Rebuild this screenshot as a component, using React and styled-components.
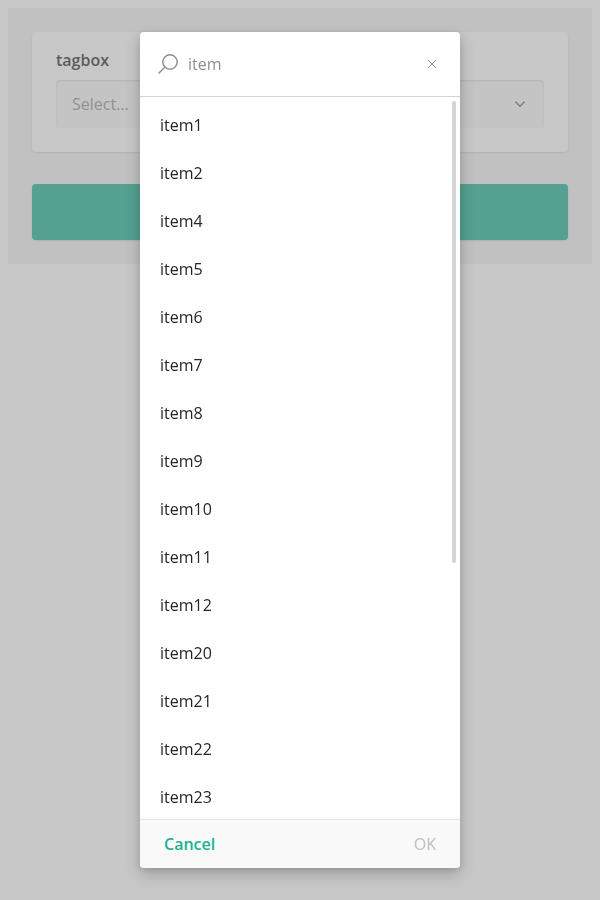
import React, { useState } from "react";
import styled, { createGlobalStyle } from "styled-components";

const GlobalStyle = createGlobalStyle`
  *, *::before, *::after { box-sizing: border-box; }
  body {
    margin: 8px;
    background: #fff;
    font-family: "Open Sans", "Noto Sans", sans-serif;
    font-size: 16px;
    line-height: 24px;
  }
  button, input { font: inherit; }
`;

const Survey = styled.form`
  display: flex;
  flex-direction: column;
  gap: 32px;
  padding: 24px;
  background: #f3f3f3;
`;

const Question = styled.section`
  padding: 16px 24px 24px;
  background: #fff;
  border-radius: 4px;
  box-shadow: 0 1px 2px rgba(0, 0, 0, 0.15);
`;

const QuestionTitle = styled.label`
  display: block;
  margin-bottom: 8px;
  font-weight: 600;
  color: #262626;
`;

const TagBox = styled.div`
  display: flex;
  align-items: center;
  height: 48px;
  padding: 0 16px;
  background: #f9f9f9;
  border-radius: 4px;
  box-shadow: inset 0 1px 2px rgba(0, 0, 0, 0.15);
`;

const TextInput = styled.input`
  flex: 1;
  min-width: 0;
  height: 24px;
  padding: 0;
  border: 0;
  outline: 0;
  background: transparent;
  color: #909090;
  &::placeholder { color: #909090; opacity: 1; }
`;

const IconButton = styled.button`
  display: flex;
  align-items: center;
  justify-content: center;
  width: 16px;
  height: 16px;
  padding: 0;
  border: 0;
  background: transparent;
  color: #909090;
`;

const CompleteButton = styled.button`
  height: 56px;
  border: 0;
  border-radius: 4px;
  background: #19b394;
  color: #fff;
  font-weight: 600;
  box-shadow: 0 1px 2px rgba(0, 0, 0, 0.15);
`;

const Overlay = styled.div`
  position: fixed;
  inset: 0;
  display: flex;
  justify-content: center;
  padding: 32px;
  background: rgba(144, 144, 144, 0.5);
`;

const Popup = styled.div`
  display: flex;
  flex-direction: column;
  width: 100%;
  max-width: 320px;
  overflow: hidden;
  background: #fff;
  border-radius: 4px;
  box-shadow: 0 2px 6px rgba(0, 0, 0, 0.1), 0 6px 16px rgba(0, 0, 0, 0.2);
`;

const SearchBar = styled.div`
  display: flex;
  flex: none;
  align-items: center;
  gap: 8px;
  height: 65px;
  padding: 0 20px 0 16px;
  border-bottom: 1px solid #d4d4d4;
`;

const SearchIcon = styled.svg`
  flex: none;
  color: #909090;
`;

const ListArea = styled.div`
  position: relative;
  flex: 1;
  min-height: 0;
`;

const List = styled.ul`
  height: 100%;
  margin: 0;
  padding: 4px 0;
  overflow-y: auto;
  scrollbar-width: none;
  list-style: none;
`;

const Item = styled.li`
  padding: 12px 20px;
  color: #262626;
`;

const ScrollThumb = styled.div`
  position: absolute;
  top: 4px;
  right: 4px;
  width: 4px;
  height: 64%;
  border-radius: 2px;
  background: #d4d4d4;
`;

const Footer = styled.footer`
  display: flex;
  flex: none;
  align-items: center;
  justify-content: space-between;
  height: 49px;
  padding: 0 24px;
  background: #f9f9f9;
  border-top: 1px solid #e4e4e4;
`;

const FooterButton = styled.button`
  padding: 0;
  border: 0;
  background: transparent;
  color: #19b394;
  font-weight: 600;
  &:disabled {
    color: #c0c0c0;
    font-weight: 400;
  }
`;

const items = [1, 2, 4, 5, 6, 7, 8, 9, 10, 11, 12, 20, 21, 22, 23].map((n) => `item${n}`);

export default function App() {
  const [query, setQuery] = useState("item");
  return (
    <>
      <GlobalStyle />
      <Survey onSubmit={(e) => e.preventDefault()}>
        <Question>
          <QuestionTitle htmlFor="tagbox">tagbox</QuestionTitle>
          <TagBox>
            <TextInput id="tagbox" placeholder="Select..." readOnly />
            <IconButton type="button" aria-label="Open list">
              <svg width="16" height="16" viewBox="0 0 16 16" fill="none" stroke="#707070" strokeWidth="1.6">
                <path d="M3.5 5.7L8 10.2l4.5-4.5" />
              </svg>
            </IconButton>
          </TagBox>
        </Question>
        <CompleteButton type="submit" aria-label="Complete" />
      </Survey>
      <Overlay>
        <Popup role="dialog" aria-label="tagbox">
          <SearchBar>
            <SearchIcon width="24" height="24" viewBox="0 0 24 24" fill="none" stroke="currentColor" strokeWidth="1.5">
              <circle cx="14" cy="10" r="7.2" />
              <path d="M9 15l-6.5 6.5" />
            </SearchIcon>
            <TextInput
              aria-label="Search"
              value={query}
              onChange={(e) => setQuery(e.target.value)}
            />
            <IconButton type="button" aria-label="Clear" onClick={() => setQuery("")}>
              <svg width="16" height="16" viewBox="0 0 16 16" fill="none" stroke="currentColor" strokeWidth="1">
                <path d="M3.8 3.8l8.4 8.4M12.2 3.8l-8.4 8.4" />
              </svg>
            </IconButton>
          </SearchBar>
          <ListArea>
            <List>
              {items.filter((name) => name.includes(query)).map((name) => (
                <Item key={name}>{name}</Item>
              ))}
            </List>
            <ScrollThumb />
          </ListArea>
          <Footer>
            <FooterButton type="button">Cancel</FooterButton>
            <FooterButton type="button" disabled>OK</FooterButton>
          </Footer>
        </Popup>
      </Overlay>
    </>
  );
}
